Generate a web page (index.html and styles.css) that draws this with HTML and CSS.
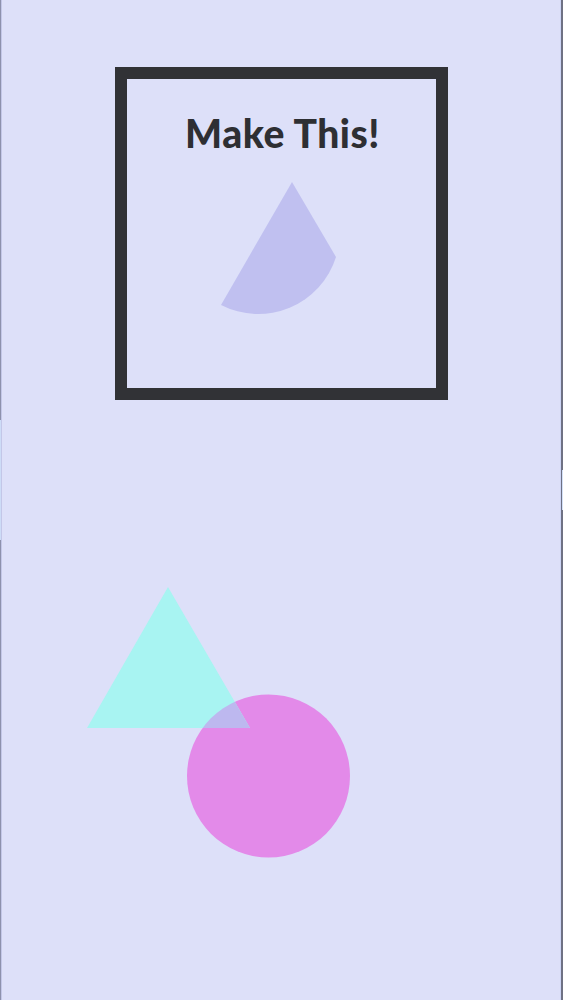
FILE: index.html
```html
<!DOCTYPE html>
<html lang="en">
<head>
<meta charset="utf-8">
<title>Make This!</title>
<link rel="stylesheet" href="styles.css">
</head>
<body>
<main class="page">
  <section class="frame">
    <h1 class="title">Make This!</h1>
    <svg class="target" viewBox="127 152 309 236" width="309" height="236" aria-hidden="true">
      <path d="M292 182 L336 257 A81.5 81.5 0 0 1 221 305 Z" fill="#c0c0f0"/>
    </svg>
  </section>
  <svg class="canvas" viewBox="0 400 563 600" width="563" height="600" aria-hidden="true">
    <defs>
      <clipPath id="circ">
        <circle cx="268.5" cy="776" r="81.5"/>
      </clipPath>
    </defs>
    <circle cx="268.5" cy="776" r="81.5" fill="#e38ae9"/>
    <polygon points="168,587 87,728 250,728" fill="#a8f4f2"/>
    <polygon points="168,587 87,728 250,728" fill="#bdb8ef" clip-path="url(#circ)"/>
  </svg>
</main>
</body>
</html>
```
FILE: styles.css
```css
html, body {
  margin: 0;
  padding: 0;
}
body {
  background: #dde0f9;
  width: 563px;
  height: 1000px;
  overflow: hidden;
  position: relative;
}
body::before,
body::after {
  content: "";
  position: absolute;
  top: 0;
  bottom: 0;
  width: 3px;
}
body::before {
  left: 0;
  background:
    linear-gradient(to bottom, transparent 0 420px, #cddcf7 420px 540px, transparent 540px) 0 0 / 1px 100% no-repeat,
    linear-gradient(to right, #8d91ad 0 1px, #c3c7e8 1px 2px, transparent 2px);
}
body::after {
  right: 0;
  background:
    linear-gradient(to bottom, transparent 0 470px, #d3e0f8 470px 510px, transparent 510px) 2px 0 / 1px 100% no-repeat,
    linear-gradient(to right, #cdd5f6 0 1px, #6e7184 1px 3px);
}
.page {
  display: flex;
  flex-direction: column;
}
.frame {
  box-sizing: border-box;
  width: 333px;
  height: 333px;
  margin: 67px 0 0 115px;
  border: 12px solid #313236;
  display: flex;
  flex-direction: column;
  align-items: center;
}
.title {
  margin: 34px 0 0;
  font-family: "Lato", "Liberation Sans", sans-serif;
  font-weight: 900;
  font-size: 39px;
  line-height: 40px;
  height: 40px;
  color: #2e2f33;
  letter-spacing: 0.5px;
  padding-left: 2px;
}
.target {
  display: block;
  margin-top: -1px;
}
.canvas {
  display: block;
}
```
